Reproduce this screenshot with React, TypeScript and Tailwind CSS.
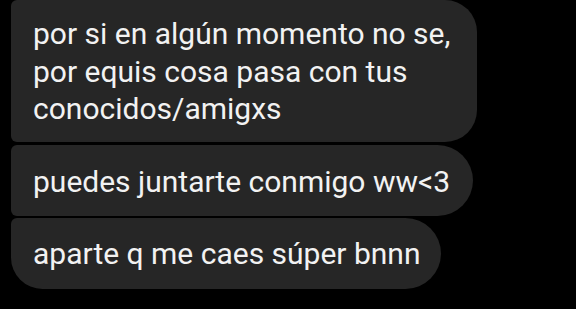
export default function App() {
  const font = { fontFamily: 'Roboto, "Noto Sans", sans-serif' };
  return (
    <div className="w-[576px] h-[309px] bg-black overflow-hidden" style={font}>
      <div className="flex flex-col items-start pl-[11px]">
        <div className="w-[466px] h-[142px] bg-[#262626] text-[#f2f2f2] text-[30px] leading-[37.5px] px-[22px] pt-[15px] whitespace-nowrap rounded-tl-[6px] rounded-bl-[6px] rounded-r-[32px]">
          por si en algún momento no se,
          <br />
          por equis cosa pasa con tus
          <br />
          conocidos/amigxs
        </div>
        <div className="mt-[3px] w-[462px] h-[71px] bg-[#262626] text-[#f2f2f2] text-[30px] leading-[37px] px-[22px] pt-[18px] whitespace-nowrap rounded-l-[6px] rounded-r-[36px]">
          puedes juntarte conmigo ww&lt;3
        </div>
        <div className="mt-[2px] w-[430px] h-[71px] bg-[#262626] text-[#f2f2f2] text-[30px] leading-[37px] px-[22px] pt-[17px] whitespace-nowrap rounded-tl-[6px] rounded-bl-[32px] rounded-r-[36px]">
          aparte q me caes súper bnnn
        </div>
      </div>
    </div>
  );
}
